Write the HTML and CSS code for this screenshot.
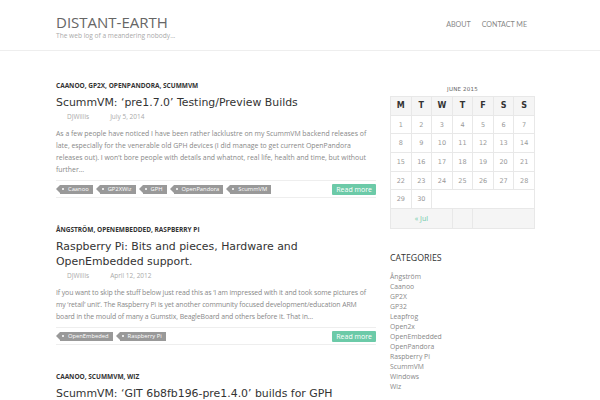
FILE: index.html
```html
<!DOCTYPE html>
<html>
<head>
<meta charset="utf-8">
<link rel="stylesheet" href="styles.css">
</head>
<body>
<header class="site-header">
  <div class="brand">
    <div class="site-title">DISTANT-EARTH</div>
    <div class="tagline">The web log of a meandering nobody...</div>
  </div>
  <nav class="nav">
    <a>ABOUT</a>
    <a>CONTACT ME</a>
  </nav>
</header>
<div class="page">
  <main class="main">
    <article class="post">
      <div class="cats">CAANOO, GP2X, OPENPANDORA, SCUMMVM</div>
      <h2 class="title">ScummVM: ‘pre1.7.0’ Testing/Preview Builds</h2>
      <div class="meta"><span class="author">DJWillis</span><span class="date">July 5, 2014</span></div>
      <p class="excerpt">As a few people have noticed I have been rather lacklustre on my ScummVM backend releases of late, especially for the venerable old GPH devices (I did manage to get current OpenPandora releases out). I won’t bore people with details and whatnot, real life, health and time, but without further…</p>
      <div class="foot">
        <div class="tags">
          <span class="tag">Caanoo</span><span class="tag">GP2XWiz</span><span class="tag">GPH</span><span class="tag">OpenPandora</span><span class="tag">ScummVM</span>
        </div>
        <a class="more">Read more</a>
      </div>
    </article>
    <article class="post">
      <div class="cats">ÅNGSTRÖM, OPENEMBEDDED, RASPBERRY PI</div>
      <h2 class="title">Raspberry Pi: Bits and pieces, Hardware and OpenEmbedded support.</h2>
      <div class="meta"><span class="author">DJWillis</span><span class="date">April 12, 2012</span></div>
      <p class="excerpt excerpt-tight">If you want to skip the stuff below just read this as ‘I am impressed with it and took some pictures of my ‘retail’ unit’. The Raspberry Pi is yet another community focused development/education ARM board in the mould of many a Gumstix, BeagleBoard and others before it. That in…</p>
      <div class="foot">
        <div class="tags">
          <span class="tag">OpenEmbeded</span><span class="tag">Raspberry Pi</span>
        </div>
        <a class="more">Read more</a>
      </div>
    </article>
    <article class="post">
      <div class="cats">CAANOO, SCUMMVM, WIZ</div>
      <h2 class="title">ScummVM: ‘GIT 6b8fb196-pre1.4.0’ builds for GPH</h2>
    </article>
  </main>
  <aside class="sidebar">
    <table class="cal">
      <caption>JUNE 2015</caption>
      <thead>
        <tr><th>M</th><th>T</th><th>W</th><th>T</th><th>F</th><th>S</th><th>S</th></tr>
      </thead>
      <tbody>
        <tr><td>1</td><td>2</td><td>3</td><td>4</td><td>5</td><td>6</td><td>7</td></tr>
        <tr><td>8</td><td>9</td><td>10</td><td>11</td><td>12</td><td>13</td><td>14</td></tr>
        <tr><td>15</td><td>16</td><td>17</td><td>18</td><td>19</td><td>20</td><td>21</td></tr>
        <tr><td>22</td><td>23</td><td>24</td><td>25</td><td>26</td><td>27</td><td>28</td></tr>
        <tr><td>29</td><td>30</td><td class="blank" colspan="5"></td></tr>
      </tbody>
      <tfoot>
        <tr><td class="prev" colspan="3">« Jul</td><td class="pad"></td><td class="next" colspan="3"></td></tr>
      </tfoot>
    </table>
    <section class="widget">
      <h3 class="widget-title">CATEGORIES</h3>
      <ul class="cat-list">
        <li>Ångström</li>
        <li>Caanoo</li>
        <li>GP2X</li>
        <li>GP32</li>
        <li>Leapfrog</li>
        <li>Open2x</li>
        <li>OpenEmbedded</li>
        <li>OpenPandora</li>
        <li>Raspberry Pi</li>
        <li>ScummVM</li>
        <li>Windows</li>
        <li>Wiz</li>
      </ul>
    </section>
  </aside>
</div>
</body>
</html>
```

FILE: styles.css
```css
html, body {
  margin: 0;
  padding: 0;
  background: #fff;
}
body {
  font-family: "Open Sans", "DejaVu Sans", sans-serif;
  color: #888;
  overflow: hidden;
  height: 400px;
}
.site-header {
  height: 50px;
  border-bottom: 1px solid #eee;
  display: flex;
  justify-content: space-between;
  align-items: flex-start;
  padding: 0 73px 0 56px;
}
.brand {
  padding-top: 14px;
}
.site-title {
  font-family: "Open Sans", sans-serif;
  font-size: 15px;
  line-height: 17px;
  color: #666;
}
.tagline {
  font-size: 6.6px;
  line-height: 9px;
  color: #aaa;
}
.nav {
  display: flex;
  gap: 11px;
  padding-top: 20px;
}
.nav a {
  font-family: "Lato", "Open Sans", sans-serif;
  font-size: 7.1px;
  color: #888;
  line-height: 9px;
}
.page {
  display: flex;
  gap: 14px;
  padding: 0 65px 0 56px;
}
.main {
  width: 320px;
  padding-top: 30px;
}
.post {
  margin-bottom: 27px;
}
.cats {
  font-size: 6.5px;
  font-weight: 700;
  color: #333;
  line-height: 10px;
}
.title {
  font-family: "DejaVu Sans", sans-serif;
  font-weight: 400;
  font-size: 10.9px;
  line-height: 15px;
  color: #333;
  margin: 4px 0 0 0;
}
.meta {
  font-size: 6.5px;
  line-height: 10px;
  color: #aaa;
  margin-top: 2px;
  padding-left: 11px;
  display: flex;
  gap: 21px;
}
.excerpt {
  font-size: 6.9px;
  line-height: 12px;
  color: #888;
  margin: 6px 0 0 0;
}
.excerpt-tight {
  letter-spacing: -0.1px;
}
.foot {
  margin-top: 4px;
  border-top: 1px solid #eee;
  border-bottom: 1px solid #eee;
  display: flex;
  justify-content: space-between;
  align-items: center;
  height: 16px;
}
.tags {
  display: flex;
  gap: 7px;
  padding-left: 4px;
}
.tag {
  position: relative;
  background: #999;
  color: #fff;
  font-size: 5.8px;
  line-height: 9px;
  height: 9px;
  padding: 0 4px 0 8px;
}
.tag::before {
  content: "";
  position: absolute;
  left: -4px;
  top: 0;
  border-style: solid;
  border-width: 4.5px 4px 4.5px 0;
  border-color: transparent #999 transparent transparent;
}
.tag::after {
  content: "";
  position: absolute;
  left: 2px;
  top: 3.5px;
  width: 2px;
  height: 2px;
  border-radius: 50%;
  background: #fff;
}
.more {
  background: #6ccaa8;
  color: #fff;
  font-size: 7px;
  line-height: 11px;
  height: 11px;
  padding: 0 4px;
  border-radius: 1px;
}
.sidebar {
  width: 145px;
  padding-top: 34px;
}
.cal {
  width: 145px;
  border-collapse: collapse;
  font-family: "DejaVu Sans", sans-serif;
  table-layout: fixed;
}
.cal caption {
  font-size: 5.5px;
  color: #666;
  line-height: 8px;
  padding-bottom: 3px;
  letter-spacing: 0.2px;
}
.cal th, .cal td {
  border: 1px solid #e8e8e8;
  height: 17.7px;
  padding: 0;
  text-align: center;
}
.cal th {
  background: #f5f5f5;
  font-size: 8px;
  font-weight: 700;
  color: #333;
}
.cal td {
  font-size: 6.5px;
  color: #999;
}
.cal tfoot td {
  background: #f5f5f5;
  height: 18.5px;
}
.cal .prev {
  color: #6ccaa8;
  font-family: "Open Sans", sans-serif;
  font-size: 7px;
}
.widget {
  margin-top: 22px;
}
.widget-title {
  font-family: "Open Sans", sans-serif;
  font-weight: 400;
  font-size: 8.8px;
  color: #333;
  margin: 0;
  line-height: 14px;
}
.cat-list {
  list-style: none;
  margin: 7px 0 0 0;
  padding: 0;
}
.cat-list li {
  font-size: 6.8px;
  line-height: 10px;
  color: #888;
}
```
